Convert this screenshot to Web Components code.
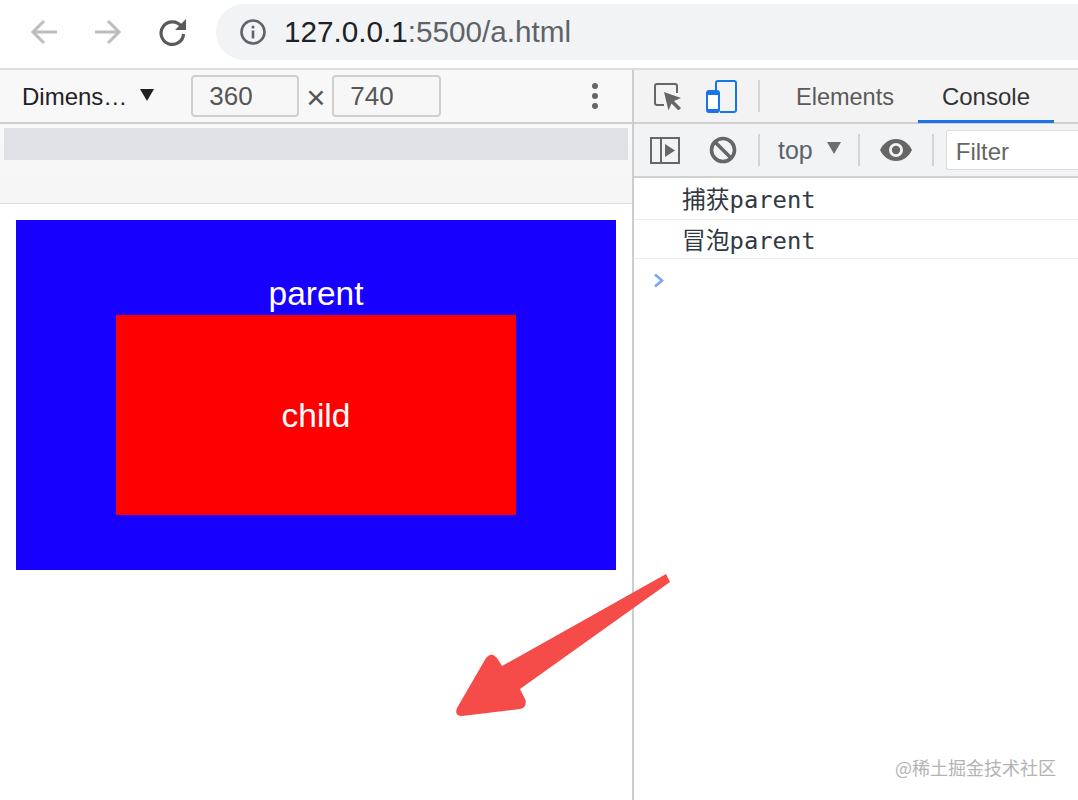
<!DOCTYPE html>
<html lang="zh">
<head>
<meta charset="utf-8">
<title>a.html</title>
<style>
    html, body { margin: 0; height: 800px; overflow: hidden; background: #fff; font-family: "Liberation Sans", "Noto Sans CJK SC", sans-serif; }
</style>
</head>
<body>
<browser-window>
    <browser-bar url-host="127.0.0.1" url-rest=":5500/a.html"></browser-bar>
    <device-toolbar slot="left"></device-toolbar>
    <emulated-page slot="left"></emulated-page>
    <devtools-panel slot="right">
        <console-line>捕获parent</console-line>
        <console-line>冒泡parent</console-line>
    </devtools-panel>
    <annotation-arrow slot="overlay"></annotation-arrow>
    <site-watermark slot="overlay">@稀土掘金技术社区</site-watermark>
</browser-window>

<script>
const define = (name, html, observe) => {
    const template = document.createElement('template');
    template.innerHTML = html;
    customElements.define(name, class extends HTMLElement {
        constructor() {
            super();
            this.attachShadow({ mode: 'open' }).appendChild(template.content.cloneNode(true));
        }
        connectedCallback() {
            if (observe) observe(this.shadowRoot, this);
        }
    });
};

define('browser-window', `
    <style>
        :host { display: block; position: relative; width: 1078px; height: 800px; overflow: hidden; }
        .split { display: grid; grid-template-columns: 632px 2px 1fr; height: 730px; }
        .divider { background: #cdcdcd; }
        .left, .right { min-width: 0; display: flex; flex-direction: column; }
    </style>
    <slot></slot>
    <div class="split">
        <div class="left"><slot name="left"></slot></div>
        <div class="divider"></div>
        <div class="right"><slot name="right"></slot></div>
    </div>
    <slot name="overlay"></slot>
`);

define('browser-bar', `
    <style>
        :host { display: flex; align-items: center; height: 68px; box-sizing: content-box; border-bottom: 2px solid #dcdcdc; background: #fff; }
        svg { display: block; flex: none; }
        .back { margin: -4px 0 0 30px; }
        .forward { margin: -4px 0 0 36px; }
        .reload { margin: -4px 0 0 36px; }
        .pill {
            flex: 1;
            display: flex;
            align-items: center;
            height: 56px;
            margin: -4px 0 0 28px;
            padding-left: 23px;
            border-radius: 28px 0 0 28px;
            background: #f1f3f4;
        }
        .url { margin-left: 17px; font-size: 29.7px; color: #5f6368; white-space: nowrap; }
        .url b { font-weight: 400; color: #202124; }
    </style>
    <svg class="back" width="28" height="28" viewBox="0 0 28 28" fill="none" stroke="#bdbdbd" stroke-width="3"><path d="M27 14H3M14 3 3 14l11 11"/></svg>
    <svg class="forward" width="28" height="28" viewBox="0 0 28 28" fill="none" stroke="#bdbdbd" stroke-width="3"><path d="M1 14h24M14 3l11 11-11 11"/></svg>
    <svg class="reload" width="30" height="30" viewBox="0 0 30 30"><path d="M23.5 9.5A11.3 11.3 0 1 0 25.6 17" fill="none" stroke="#5a5a5a" stroke-width="3.2"/><path d="M28 2v11H17z" fill="#5a5a5a"/></svg>
    <div class="pill">
        <svg width="28" height="28" viewBox="0 0 28 28"><circle cx="14" cy="14" r="11.5" fill="none" stroke="#5f6368" stroke-width="2.6"/><path d="M12.7 12.5h2.6v8h-2.6zM12.7 7.8h2.6v2.6h-2.6z" fill="#5f6368"/></svg>
        <span class="url"><b id="host"></b><span id="rest"></span></span>
    </div>
`, (root, el) => {
    root.getElementById('host').textContent = el.getAttribute('url-host');
    root.getElementById('rest').textContent = el.getAttribute('url-rest');
});

define('device-toolbar', `
    <style>
        :host { display: block; }
        .bar {
            display: flex;
            align-items: center;
            height: 52px;
            padding-left: 22px;
            background: #f8f8f8;
            border-bottom: 2px solid #d0d0d0;
            font-size: 24px;
            color: #222;
        }
        .name { padding-top: 2px; }
        .tri { margin-left: 13px; width: 0; height: 0; border: 7.5px solid transparent; border-top: 12px solid #222; border-bottom: 0; margin-top: -3px; }
        .size {
            box-sizing: border-box;
            width: 108px;
            height: 42px;
            padding-left: 16px;
            border: 2px solid #cfcfcf;
            border-radius: 4px;
            background: #f7f7f7;
            font-size: 26px;
            line-height: 38px;
            color: #555;
        }
        .w { margin-left: 37px; }
        .h { width: 109px; }
        .x { width: 33px; text-align: center; font-size: 33px; color: #555; line-height: 42px; padding-top: 2px; box-sizing: border-box; height: 42px; }
        .more { margin-left: 151px; display: flex; flex-direction: column; gap: 4px; }
        .more i { width: 6px; height: 6px; border-radius: 50%; background: #666; }
        .rulers { background: linear-gradient(#f9f9f9, #f5f5f5); border-bottom: 1px solid #dcdcdc; padding: 4px 4px 0; height: 75px; }
        .track { height: 32px; background: #dfe1e4; }
    </style>
    <div class="bar">
        <span class="name">Dimens…</span><span class="tri"></span>
        <div class="size w">360</div><div class="x">×</div><div class="size h">740</div>
        <div class="more"><i></i><i></i><i></i></div>
    </div>
    <div class="rulers"><div class="track"></div></div>
`);

define('emulated-page', `
    <style>
        :host { display: block; padding: 16px; color: #fff; font-size: 33.5px; text-align: center; }
        .parent { height: 350px; padding-top: 54px; box-sizing: border-box; background: #1800ff; }
        .label { height: 41px; line-height: 40px; }
        .child { display: flex; align-items: center; justify-content: center; width: 400px; height: 200px; padding-top: 1px; box-sizing: border-box; margin: 0 auto; background: #ff0000; }
    </style>
    <div class="parent">
        <div class="label">parent</div>
        <div class="child">child</div>
    </div>
`);

define('devtools-panel', `
    <style>
        :host { display: block; font-size: 24px; }
        svg { display: block; flex: none; }
        .tabs {
            display: flex;
            align-items: center;
            height: 52px;
            background: #f3f3f3;
            border-bottom: 2px solid #d0d0d0;
        }
        .sep { flex: none; width: 2px; height: 32px; background: #d4d4d4; }
        .tab { display: flex; align-items: center; height: 100%; box-sizing: border-box; padding-top: 2px; color: #5a5a5a; }
        .elements { margin-left: 36px; font-size: 23.5px; }
        .console { position: relative; width: 136px; margin-left: 24px; justify-content: center; color: #333; }
        .console::after { content: ""; position: absolute; left: 0; right: 0; bottom: -1px; height: 3px; background: #1a73e8; }
        .tools {
            display: flex;
            align-items: center;
            height: 52px;
            background: #f1f3f4;
            border-bottom: 2px solid #d0d0d0;
            color: #5f6368;
        }
        .top { margin-left: 18px; font-size: 25px; padding-top: 1px; }
        .tri { margin-left: 14px; width: 0; height: 0; border: 7px solid transparent; border-top: 12px solid #6e6e6e; border-bottom: 0; margin-top: -5px; }
        .filter {
            flex: 1;
            box-sizing: border-box;
            height: 40px;
            margin-left: 12px;
            padding-left: 9px;
            border: 1px solid #dadce0;
            border-right: 0;
            border-radius: 3px 0 0 3px;
            background: #fff;
            line-height: 41px;
            color: #666;
        }
        .prompt { margin: 14px 0 0 19px; }
    </style>
    <div class="tabs">
        <svg style="margin-left:19px" width="29" height="28" viewBox="0 0 29 28"><path d="M11 23H4a2 2 0 0 1-2-2V4a2 2 0 0 1 2-2h18a2 2 0 0 1 2 2v7" fill="none" stroke="#666" stroke-width="2"/><path d="M11 10l17 6-7 3 7 7-2.5 2.500-7-7-3 7z" fill="#666"/></svg>
        <svg style="margin-left:24px" width="31" height="33" viewBox="0 0 31 33"><path d="M10 10V3a2 2 0 0 1 2-2h16a2 2 0 0 1 2 2v27a2 2 0 0 1-2 2H14" fill="none" stroke="#1a73e8" stroke-width="2"/><rect x="1" y="11" width="12" height="21" rx="2" fill="#fff" stroke="#1a73e8" stroke-width="2"/><path d="M1 13a2 2 0 0 1 2-2h8a2 2 0 0 1 2 2v2H1z" fill="#1a73e8"/><path d="M1 29h12v1a2 2 0 0 1-2 2H3a2 2 0 0 1-2-2z" fill="#1a73e8"/></svg>
        <div class="sep" style="margin-left:21px"></div>
        <div class="tab elements">Elements</div>
        <div class="tab console">Console</div>
    </div>
    <div class="tools">
        <svg style="margin-left:16px" width="30" height="27" viewBox="0 0 30 27"><rect x="1" y="1" width="28" height="25" fill="none" stroke="#666" stroke-width="2"/><path d="M11 1v25" stroke="#666" stroke-width="2"/><path d="M15 7l10 6.500-10 6.500z" fill="#666"/></svg>
        <svg style="margin-left:29px" width="28" height="28" viewBox="0 0 28 28"><circle cx="14" cy="14" r="11.500" fill="none" stroke="#666" stroke-width="3.600"/><path d="M6 6l16 16" stroke="#666" stroke-width="3.600"/></svg>
        <div class="sep" style="margin-left:21px"></div>
        <span class="top">top</span><span class="tri"></span>
        <div class="sep" style="margin-left:17px"></div>
        <svg style="margin-left:20px" width="32" height="22" viewBox="0 0 32 22"><path d="M16 0C9 0 3 4.500 0 11c3 6.500 9 11 16 11s13-4.500 16-11C29 4.500 23 0 16 0z" fill="#666"/><circle cx="16" cy="11" r="7" fill="#f1f3f4"/><circle cx="16" cy="11" r="4.200" fill="#666"/></svg>
        <div class="sep" style="margin-left:20px"></div>
        <div class="filter">Filter</div>
    </div>
    <slot></slot>
    <svg class="prompt" width="12" height="15" viewBox="0 0 12 15" fill="none" stroke="#7ba6ee" stroke-width="2.600"><path d="M2 1.500 9 7.500 2 13.500"/></svg>
`);

define('console-line', `
    <style>
        :host {
            display: block;
            box-sizing: border-box;
            height: 42px;
            padding-left: 48px;
            border-bottom: 1px solid #ececec;
            font: 23.800px/44px "DejaVu Sans Mono", "Noto Sans CJK SC", monospace;
            color: #303942;
            white-space: nowrap;
        }
        :host(:nth-of-type(2)) { height: 39px; line-height: 42px; }
    </style>
    <slot></slot>
`);

define('annotation-arrow', `
    <style>
        :host { position: absolute; left: 450px; top: 568px; width: 226px; height: 154px; }
        svg { display: block; }
    </style>
    <svg width="226" height="154" viewBox="450 568 226 154">
        <path d="M666 574 670 582 520 689 525.500 700Q527 708 520 709L462 716Q454 716 457 708L486 658Q491.500 651 497 658L502 666z" fill="#f64c49"/>
    </svg>
`);

define('site-watermark', `
    <style>
        :host {
            position: absolute;
            right: 22px;
            bottom: 22px;
            font: 18px/22px "Noto Sans CJK SC", "Liberation Sans", sans-serif;
            color: #b3b3b3;
            white-space: nowrap;
        }
    </style>
    <slot></slot>
`);
</script>
</body>
</html>
